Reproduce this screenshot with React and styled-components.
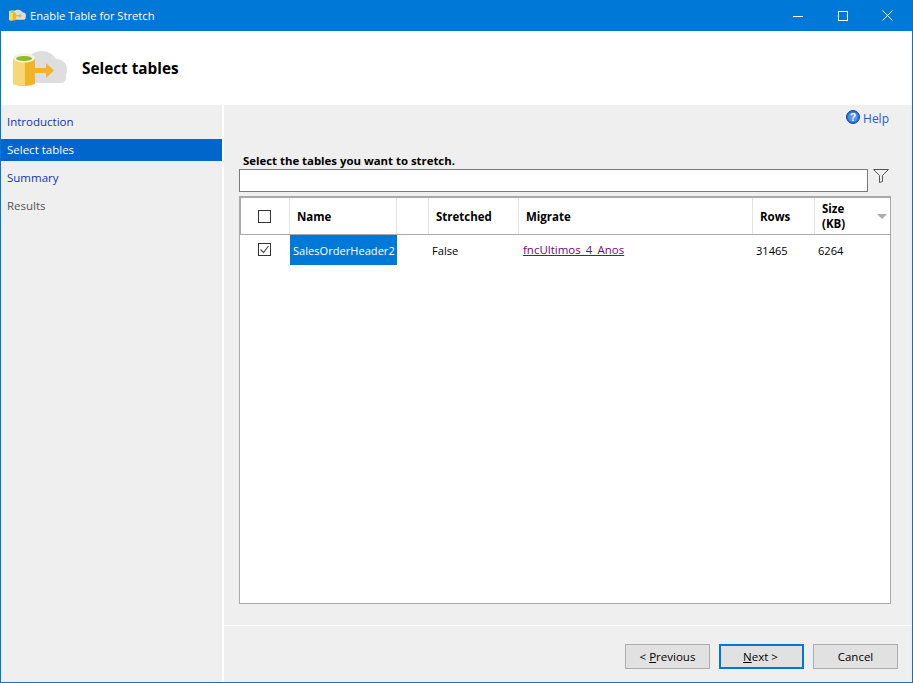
import styled, { createGlobalStyle } from "styled-components";

const GlobalStyle = createGlobalStyle`
  html, body {
    margin: 0;
    padding: 0;
    background: #fff;
  }
  * {
    box-sizing: border-box;
  }
`;

const COLUMNS = "49px 107px 32px 90px 234px 62px 1fr";

const Window = styled.div`
  width: 913px;
  height: 683px;
  display: flex;
  flex-direction: column;
  background: #fff;
  border: 1px solid #0078d7;
  border-top: 0;
  font-family: "Open Sans", "Noto Sans", sans-serif;
  font-size: 11.5px;
  color: #000;
  overflow: hidden;
`;

const TitleBar = styled.div`
  height: 31px;
  flex: none;
  display: flex;
  align-items: center;
  background: #0078d7;
  color: #fff;
  padding: 0 2px 0 8px;
  font-size: 11.2px;
`;

const TitleText = styled.span`
  margin-left: 4px;
  flex: 1;
`;

const WinButton = styled.div`
  width: 45px;
  height: 30px;
  display: flex;
  align-items: center;
  justify-content: center;
`;

const Banner = styled.div`
  height: 74px;
  flex: none;
  display: flex;
  align-items: center;
  padding-left: 12px;
  background: #fff;
`;

const BannerTitle = styled.h1`
  margin: 0 0 0 15px;
  font-size: 15.3px;
  font-weight: 700;
`;

const Body = styled.div`
  flex: 1;
  display: flex;
  gap: 2px;
  min-height: 0;
`;

const Sidebar = styled.nav`
  width: 221px;
  flex: none;
  background: #efefef;
  padding-top: 6px;
`;

const NavItem = styled.div`
  height: 22px;
  margin-bottom: 6px;
  padding-left: 6px;
  line-height: 21px;
  background: ${(p) => (p.$active ? "#0066cc" : "transparent")};
  color: ${(p) => (p.$active ? "#fff" : p.$muted ? "#555" : "#0f32bd")};
`;

const Main = styled.main`
  flex: 1;
  display: flex;
  flex-direction: column;
  background: #efefef;
  min-width: 0;
`;

const HelpRow = styled.div`
  height: 48px;
  flex: none;
  display: flex;
  justify-content: flex-end;
  align-items: flex-start;
  gap: 3px;
  padding: 5px 23px 0 0;
  color: #1a5fc4;
  font-size: 12px;
`;

const Content = styled.div`
  flex: 1;
  display: flex;
  flex-direction: column;
  padding: 0 21px 21px 15px;
  min-height: 0;
`;

const Prompt = styled.div`
  height: 16px;
  padding-left: 4px;
  font-size: 11.4px;
  font-weight: 700;
  line-height: 16px;
`;

const FilterRow = styled.div`
  display: flex;
  align-items: flex-start;
  gap: 5px;
  margin-bottom: 4px;
`;

const FilterInput = styled.div`
  width: 629px;
  height: 23px;
  background: #fff;
  border: 1px solid #7a7a7a;
`;

const Grid = styled.div`
  flex: 1;
  background: #fff;
  border: 1px solid #a9a9a9;
  width: 652px;
`;

const HeaderRow = styled.div`
  display: grid;
  grid-template-columns: ${COLUMNS};
  height: 38px;
  border-top: 1px solid #a9a9a9;
  border-bottom: 1px solid #a9a9a9;
  border-left: 1px solid #a9a9a9;
  font-weight: 700;
`;

const HeaderCell = styled.div`
  display: flex;
  align-items: center;
  justify-content: ${(p) => (p.$center ? "center" : "flex-start")};
  padding-left: ${(p) => (p.$center ? 0 : "7px")};
  border-right: ${(p) => (p.$last ? 0 : "1px solid #e3e3e3")};
  line-height: 15px;
  position: relative;
`;

const SortArrow = styled.span`
  position: absolute;
  right: 3px;
  top: 16px;
  width: 0;
  height: 0;
  border-left: 5px solid transparent;
  border-right: 5px solid transparent;
  border-top: 5px solid #aaa;
`;

const DataRow = styled.div`
  display: grid;
  grid-template-columns: ${COLUMNS};
  height: 30px;
  padding-left: 1px;
  font-size: 11.1px;
`;

const DataCell = styled.div`
  display: flex;
  align-items: center;
  justify-content: ${(p) => (p.$center ? "center" : "flex-start")};
  padding-left: ${(p) => p.$pad ?? 3}px;
  background: ${(p) => (p.$selected ? "#0078d7" : "transparent")};
  color: ${(p) => (p.$selected ? "#fff" : "#000")};
  white-space: nowrap;
`;

const VisitedLink = styled.a`
  color: #800080;
  font-size: 11.5px;
  text-decoration: underline;
  margin: -1px 0 0 1px;
`;

const Checkbox = styled.div`
  width: 13px;
  height: 13px;
  margin: 0 2px ${(p) => (p.$raised ? "2px" : 0)} 0;
  border: 1px solid #333;
  background: #fff;
  display: flex;
  align-items: center;
  justify-content: center;
`;

const Footer = styled.div`
  height: 57px;
  flex: none;
  display: flex;
  justify-content: flex-end;
  align-items: flex-start;
  gap: 9px;
  padding: 18px 14px 0 0;
  border-top: 1px solid #fff;
`;

const Button = styled.div`
  width: 85px;
  height: 25px;
  display: flex;
  align-items: center;
  justify-content: center;
  background: #e1e1e1;
  border: ${(p) => (p.$primary ? "2px solid #0078d7" : "1px solid #adadad")};
  padding-right: ${(p) => (p.$primary ? "2px" : 0)};
  white-space: pre;
`;

const Underlined = styled.span`
  text-decoration: underline;
`;

function AppIcon({ size }) {
  return (
    <svg width={size} height={size * 0.72} viewBox="0 0 54 39">
      <path
        d="M14 34 a9 9 0 0 1 -2 -17 c1 -9 8 -15 17 -15 c6 0 11 3 14 8 c6 0 11 4 11 10 c0 3 0 4 -1 6 c1 5 -1 8 -6 8z"
        fill="#dedede"
      />
      <path d="M0 9 h22 v26 q-11 4 -22 0z" fill="#f0b429" />
      <path d="M0 9 h12 v28 q-7 0 -12 -2z" fill="#f7d876" />
      <ellipse cx="11" cy="9" rx="11" ry="4.5" fill="#f3f3e0" />
      <ellipse cx="11" cy="9.5" rx="8" ry="2.6" fill="#8fbc1e" />
      <path d="M20 19 h13 v-5 l8 7.5 l-8 7.5 v-5 h-13z" fill="#f0b429" />
    </svg>
  );
}

function FilterIcon() {
  return (
    <svg width="16" height="14" viewBox="0 0 16 14" fill="none" stroke="#555" strokeWidth="1">
      <path d="M0.5 0.5 H15.5 L9.5 6.5 V12.5 L6.5 13.5 V6.5 Z" />
    </svg>
  );
}

function HelpIcon() {
  return (
    <svg width="14" height="14" viewBox="0 0 14 14">
      <circle cx="7" cy="7" r="6.5" fill="#2b6fd4" stroke="#16459a" strokeWidth="1" />
      <circle cx="7" cy="7" r="4.8" fill="#4f93ea" />
      <text x="7" y="10.5" fontSize="10" fontWeight="700" textAnchor="middle" fill="#fff" fontFamily="Liberation Sans, sans-serif">
        ?
      </text>
    </svg>
  );
}

export default function App() {
  return (
    <>
      <GlobalStyle />
      <Window>
        <TitleBar>
          <AppIcon size={17} />
          <TitleText>Enable Table for Stretch</TitleText>
          <WinButton>
            <svg width="10" height="10" viewBox="0 0 10 10" stroke="#fff" fill="none">
              <path d="M0 5.5 H10" />
            </svg>
          </WinButton>
          <WinButton>
            <svg width="10" height="10" viewBox="0 0 10 10" stroke="#fff" fill="none">
              <rect x="0.5" y="0.5" width="9" height="9" />
            </svg>
          </WinButton>
          <WinButton>
            <svg width="11" height="11" viewBox="0 0 11 11" stroke="#fff" fill="none">
              <path d="M0.5 0.5 L10.5 10.5 M10.5 0.5 L0.5 10.5" />
            </svg>
          </WinButton>
        </TitleBar>
        <Banner>
          <AppIcon size={54} />
          <BannerTitle>Select tables</BannerTitle>
        </Banner>
        <Body>
          <Sidebar>
            <NavItem>Introduction</NavItem>
            <NavItem $active>Select tables</NavItem>
            <NavItem>Summary</NavItem>
            <NavItem $muted>Results</NavItem>
          </Sidebar>
          <Main>
            <HelpRow>
              <HelpIcon />
              Help
            </HelpRow>
            <Content>
              <Prompt>Select the tables you want to stretch.</Prompt>
              <FilterRow>
                <FilterInput />
                <FilterIcon />
              </FilterRow>
              <Grid>
                <HeaderRow>
                  <HeaderCell $center>
                    <Checkbox />
                  </HeaderCell>
                  <HeaderCell>Name</HeaderCell>
                  <HeaderCell />
                  <HeaderCell>Stretched</HeaderCell>
                  <HeaderCell>Migrate</HeaderCell>
                  <HeaderCell>Rows</HeaderCell>
                  <HeaderCell $last>
                    Size
                    <br />
                    (KB)
                    <SortArrow />
                  </HeaderCell>
                </HeaderRow>
                <DataRow>
                  <DataCell $center $pad={0}>
                    <Checkbox $raised>
                      <svg width="11" height="11" viewBox="0 0 11 11" fill="none" stroke="#555" strokeWidth="1.2">
                        <path d="M1.5 5.5 L4.5 8.5 L9.5 2" />
                      </svg>
                    </Checkbox>
                  </DataCell>
                  <DataCell $selected>SalesOrderHeader2</DataCell>
                  <DataCell />
                  <DataCell>False</DataCell>
                  <DataCell>
                    <VisitedLink>fncUltimos_4_Anos</VisitedLink>
                  </DataCell>
                  <DataCell>31465</DataCell>
                  <DataCell>6264</DataCell>
                </DataRow>
              </Grid>
            </Content>
            <Footer>
              <Button>
                {"< "}
                <Underlined>P</Underlined>revious
              </Button>
              <Button $primary>
                <Underlined>N</Underlined>ext {">"}
              </Button>
              <Button>Cancel</Button>
            </Footer>
          </Main>
        </Body>
      </Window>
    </>
  );
}
